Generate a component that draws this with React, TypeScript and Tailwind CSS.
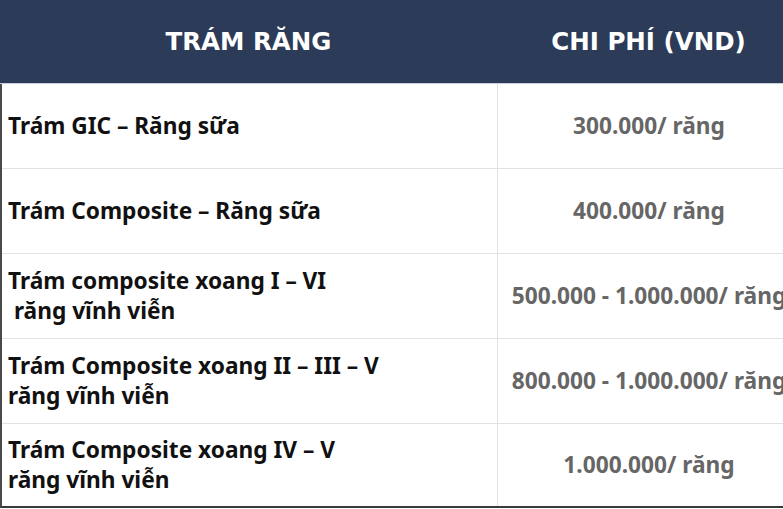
import React from "react";

const rows: { name: React.ReactNode; price: string }[] = [
  { name: "Trám GIC – Răng sữa", price: "300.000/ răng" },
  { name: "Trám Composite – Răng sữa", price: "400.000/ răng" },
  {
    name: (
      <>
        Trám composite xoang I – VI
        <br />
        &nbsp;răng vĩnh viễn
      </>
    ),
    price: "500.000 - 1.000.000/ răng",
  },
  {
    name: (
      <>
        Trám Composite xoang II – III – V
        <br />
        răng vĩnh viễn
      </>
    ),
    price: "800.000 - 1.000.000/ răng",
  },
  {
    name: (
      <>
        Trám Composite xoang IV – V
        <br />
        răng vĩnh viễn
      </>
    ),
    price: "1.000.000/ răng",
  },
];

export default function App() {
  return (
    <div className="w-[783px] h-[509px] overflow-hidden bg-white">
      <div className="w-[800px] flex flex-col">
        <div
          className="flex h-[84px] bg-[#2c3b57] text-white font-bold text-[24.5px] border-b border-[#c8d0dc]"
          style={{ fontFamily: '"DejaVu Sans", "Open Sans", sans-serif' }}
        >
          <div className="w-[497px] flex items-center justify-center pt-[2px]">TRÁM RĂNG</div>
          <div className="flex-1 flex items-center justify-center pt-[2px]">CHI PHÍ (VND)</div>
        </div>
        <div className="flex flex-col border-l-2 border-b-2 border-l-[#4a4a4a] border-b-[#3a3a3a]">
          {rows.map((r, i) => (
            <div
              key={i}
              className={`flex ${i < rows.length - 1 ? "h-[85px] border-b border-[#e2e2e2]" : "h-[82px]"}`}
              style={{ fontFamily: '"Noto Sans", sans-serif' }}
            >
              <div className="w-[495px] flex items-center pl-[6px] text-[22.7px] leading-[30px] font-bold text-[#111]">
                <div>{r.name}</div>
              </div>
              <div className="flex-1 flex items-center justify-center border-l border-[#e2e2e2] whitespace-nowrap text-[22.7px] font-bold text-[#666]">
                <div>{r.price}</div>
              </div>
            </div>
          ))}
        </div>
      </div>
    </div>
  );
}
